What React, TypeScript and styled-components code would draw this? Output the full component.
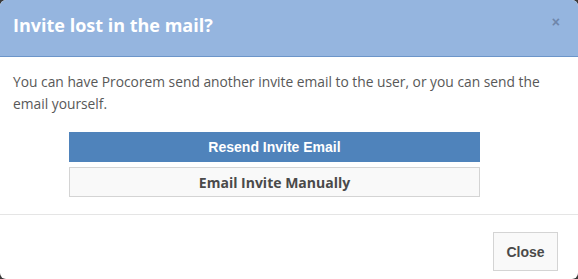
import React from "react";
import styled, { createGlobalStyle } from "styled-components";

const GlobalStyle = createGlobalStyle`
  html, body {
    margin: 0;
    padding: 0;
    background: #3a3a3a;
  }
  * {
    box-sizing: border-box;
  }
`;

const Modal = styled.div`
  width: 578px;
  height: 279px;
  background: #ffffff;
  border-radius: 6px;
  overflow: hidden;
  display: flex;
  flex-direction: column;
  font-family: "Open Sans", "Liberation Sans", sans-serif;
`;

const Header = styled.div`
  height: 57px;
  background: #95b5df;
  border-bottom: 1px solid #6c95c9;
  display: flex;
  align-items: center;
  justify-content: space-between;
  padding: 0 18px 6px 13px;
`;

const Title = styled.h2`
  margin: 0;
  font-size: 18px;
  font-weight: 700;
  color: #ffffff;
`;

const CloseX = styled.button`
  border: none;
  background: none;
  padding: 0;
  margin-bottom: 6px;
  font-family: "Liberation Sans", Arial, sans-serif;
  font-size: 14px;
  font-weight: 700;
  line-height: 1;
  color: #6f86aa;
  cursor: pointer;
`;

const Body = styled.div`
  padding: 14px 13px 17px;
  border-bottom: 1px solid #e5e5e5;
`;

const Message = styled.p`
  margin: 0 0 17px;
  font-size: 13.8px;
  line-height: 22px;
  color: #585858;
`;

const Actions = styled.div`
  display: flex;
  flex-direction: column;
  gap: 5px;
  width: 411px;
  margin-left: 56px;
`;

const ActionButton = styled.button<{ $primary?: boolean }>`
  height: 30px;
  width: 100%;
  border: 1px solid ${(p) => (p.$primary ? "#4f83bb" : "#d4d4d4")};
  background: ${(p) => (p.$primary ? "#4f83bb" : "#f9f9f9")};
  color: ${(p) => (p.$primary ? "#ffffff" : "#4a4a4a")};
  font-family: ${(p) =>
    p.$primary
      ? `"Liberation Sans", Arial, sans-serif`
      : `"Open Sans", "Liberation Sans", sans-serif`};
  font-size: ${(p) => (p.$primary ? "14px" : "14px")};
  font-weight: 700;
  cursor: pointer;
`;

const Footer = styled.div`
  flex: 1;
  display: flex;
  justify-content: flex-end;
  padding: 17px 20px 0;
`;

const FooterButton = styled.button`
  width: 65px;
  height: 39px;
  border: 1px solid #d4d4d4;
  background: #f9f9f9;
  color: #4a4a4a;
  font-family: "Liberation Sans", Arial, sans-serif;
  font-size: 14px;
  font-weight: 700;
  cursor: pointer;
`;

export default function App() {
  return (
    <>
      <GlobalStyle />
      <Modal>
        <Header>
          <Title>Invite lost in the mail?</Title>
          <CloseX aria-label="Close">×</CloseX>
        </Header>
        <Body>
          <Message>
            You can have Procorem send another invite email to the user, or you
            can send the email yourself.
          </Message>
          <Actions>
            <ActionButton $primary>Resend Invite Email</ActionButton>
            <ActionButton>Email Invite Manually</ActionButton>
          </Actions>
        </Body>
        <Footer>
          <FooterButton>Close</FooterButton>
        </Footer>
      </Modal>
    </>
  );
}
